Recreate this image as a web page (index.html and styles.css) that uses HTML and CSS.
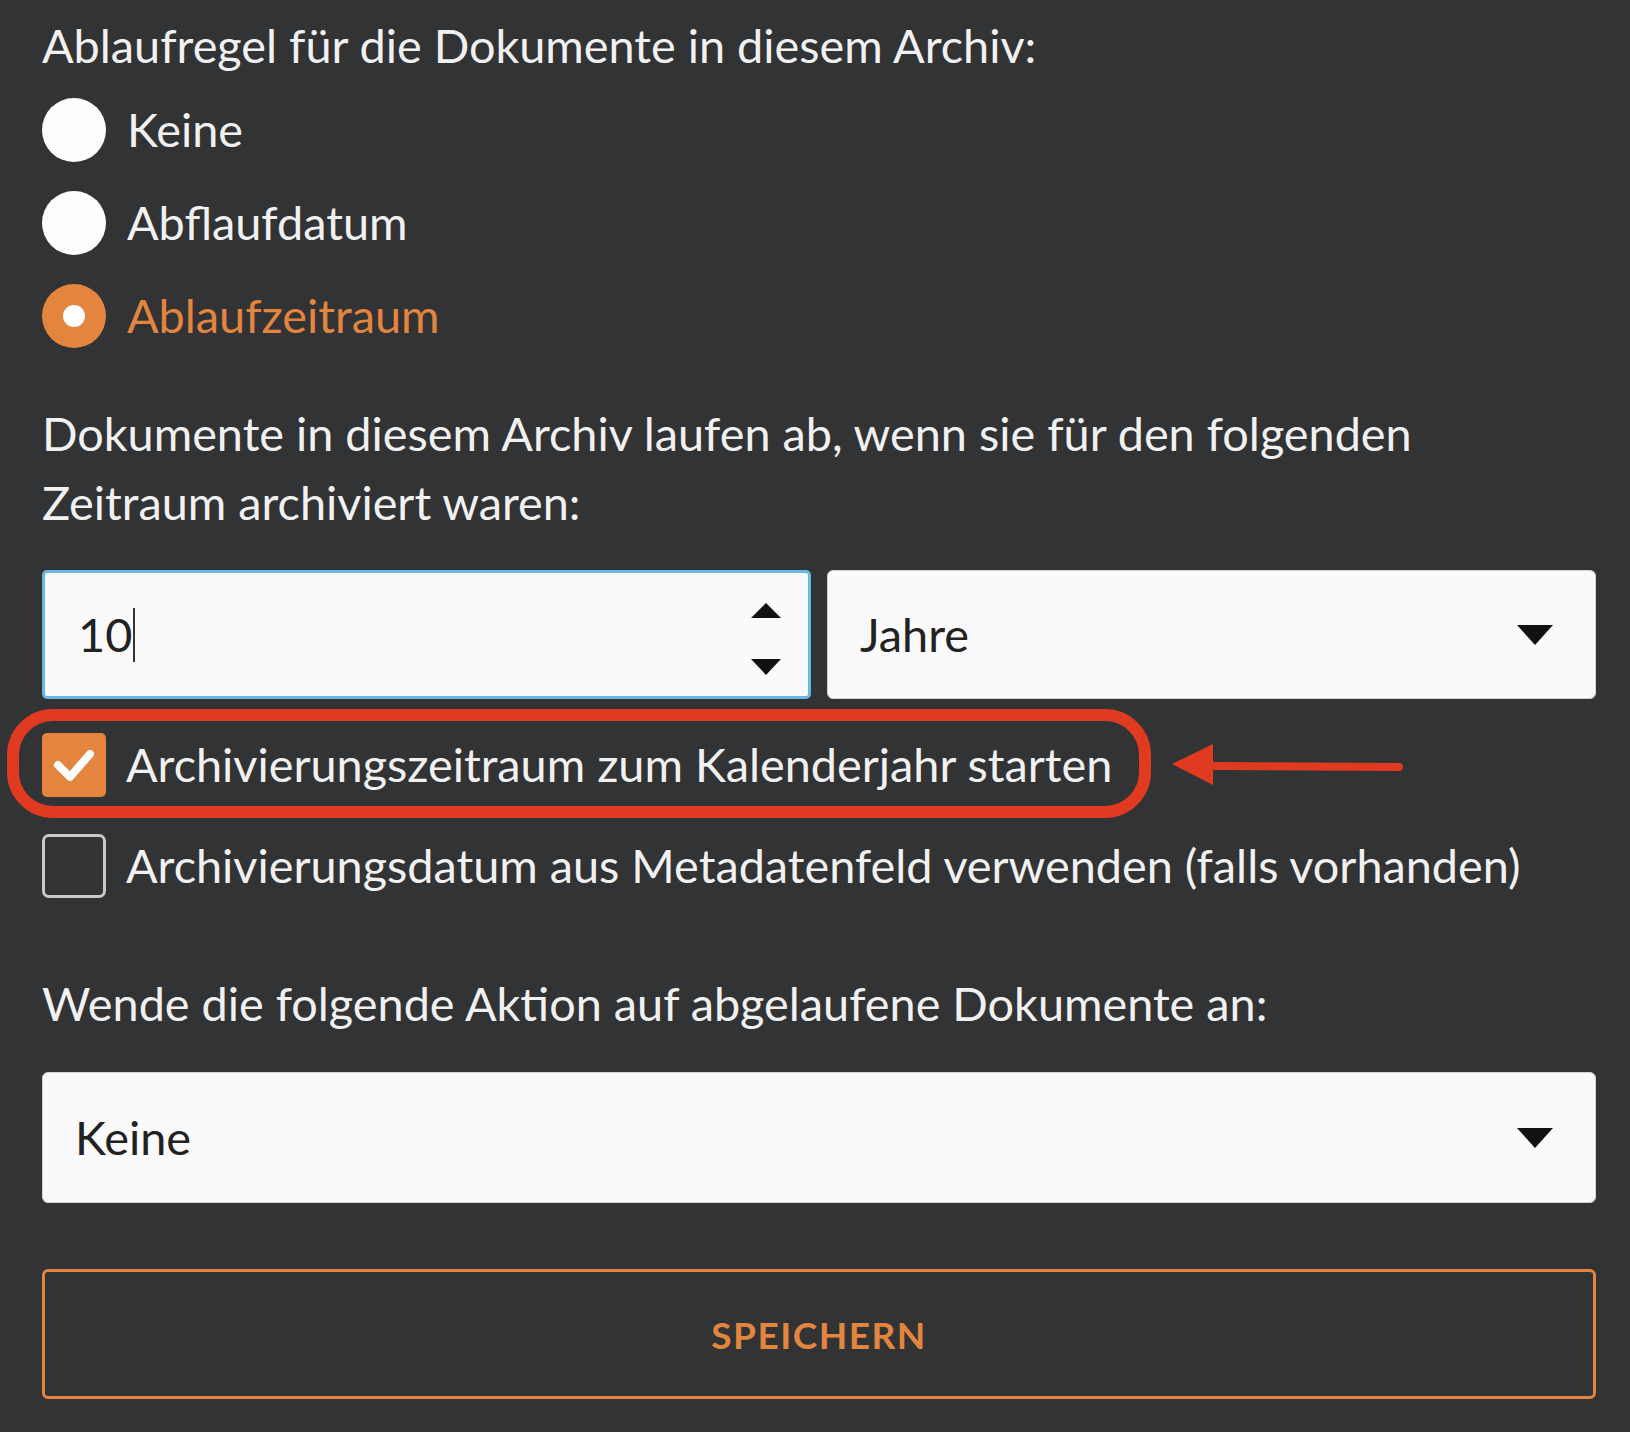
FILE: index.html
```html
<!DOCTYPE html>
<html lang="de">
<head>
<meta charset="utf-8">
<title>Ablaufregel</title>
<link rel="stylesheet" href="styles.css">
</head>
<body>
<form class="panel">
  <p class="label">Ablaufregel für die Dokumente in diesem Archiv:</p>
  <div class="radios">
    <div class="radio"><span class="dot"></span><span>Keine</span></div>
    <div class="radio"><span class="dot"></span><span>Abflaufdatum</span></div>
    <div class="radio is-on"><span class="dot"></span><span>Ablaufzeitraum</span></div>
  </div>

  <p class="label para">Dokumente in diesem Archiv laufen ab, wenn sie für den folgenden Zeitraum archiviert waren:</p>

  <div class="period">
    <div class="field number">
      <span class="value">10</span><span class="caret"></span>
      <svg class="spin" width="30" height="84" viewBox="0 0 30 84">
        <polygon points="15,10 30,25 0,25" fill="#111"/>
        <polygon points="0,66 30,66 15,82" fill="#111"/>
      </svg>
    </div>
    <div class="field select">
      <span class="value">Jahre</span>
      <svg class="chev" width="36" height="20" viewBox="0 0 36 20"><polygon points="0,0 36,0 18,20" fill="#111"/></svg>
    </div>
  </div>

  <div class="checks">
    <div class="check is-on">
      <span class="box">
        <svg width="64" height="64" viewBox="0 0 64 64"><polyline points="16,32 28,44 48,21" fill="none" stroke="#fff" stroke-width="8" stroke-linecap="round" stroke-linejoin="round"/></svg>
      </span>
      <span>Archivierungszeitraum zum Kalenderjahr starten</span>
      <span class="ring"></span>
      <svg class="pointer" width="240" height="50" viewBox="0 0 240 50">
        <line x1="44" y1="25" x2="234" y2="26" stroke="#e03a21" stroke-width="8" stroke-linecap="round"/>
        <polygon points="7,23 48,3 48,44" fill="#e03a21"/>
      </svg>
    </div>
    <div class="check">
      <span class="box"></span>
      <span>Archivierungsdatum aus Metadatenfeld verwenden (falls vorhanden)</span>
    </div>
  </div>

  <p class="label action">Wende die folgende Aktion auf abgelaufene Dokumente an:</p>
  <div class="field select wide">
    <span class="value">Keine</span>
    <svg class="chev" width="36" height="20" viewBox="0 0 36 20"><polygon points="0,0 36,0 18,20" fill="#111"/></svg>
  </div>

  <button type="button" class="save">SPEICHERN</button>
</form>
</body>
</html>
```

FILE: styles.css
```css
html, body {
  margin: 0;
  background: #323335;
}

.panel {
  width: 1554px;
  padding: 18px 0 30px 42px;
  font-family: Lato, "Noto Sans", sans-serif;
  font-size: 46.8px;
  line-height: 55px;
  color: #f1f1f1;
}

.label {
  margin: 0;
}

/* radio group */
.radios {
  margin-top: 10px;
}

.radio {
  display: flex;
  align-items: center;
  gap: 21px;
  height: 93px;
}

.dot {
  flex: none;
  width: 64px;
  height: 64px;
  border-radius: 50%;
  background: #fdfdfd;
  position: relative;
}

.radio.is-on {
  color: #e3843f;
}

.radio.is-on .dot {
  background: #e3843f;
}

.radio.is-on .dot::after {
  content: "";
  position: absolute;
  left: 21px;
  top: 21px;
  width: 22px;
  height: 22px;
  border-radius: 50%;
  background: #fff;
}

.para {
  margin-top: 37px;
  line-height: 69px;
}

/* period inputs */
.period {
  display: grid;
  grid-template-columns: 1fr 1fr;
  gap: 16px;
  margin-top: 33px;
}

.field {
  box-sizing: border-box;
  height: 129px;
  display: flex;
  align-items: center;
  padding: 0 42px 0 32px;
  background: #fafafa;
  border: 1px solid #d2d2d2;
  border-radius: 6px;
  color: #222;
}

.field .value {
  flex: none;
}

.field .chev {
  margin-left: auto;
}

.number {
  border: 3px solid #6ab7e6;
  border-radius: 5px;
  padding: 0 27px 0 33px;
}

.caret {
  width: 2px;
  height: 54px;
  margin-left: 1px;
  background: #333;
}

.spin {
  margin-left: auto;
}

/* checkboxes */
.checks {
  margin-top: 15px;
}

.check {
  position: relative;
  display: flex;
  align-items: center;
  gap: 20px;
  height: 101px;
}

.box {
  flex: none;
  box-sizing: border-box;
  width: 64px;
  height: 64px;
  border: 3px solid #c9c9c9;
  border-radius: 7px;
}

.check.is-on .box {
  border: 0;
  border-radius: 5px;
  background: #e3843f;
}

.box svg {
  display: block;
}

.ring {
  position: absolute;
  left: -35px;
  top: -5px;
  box-sizing: border-box;
  width: 1144px;
  height: 109px;
  border: 12px solid #e03a21;
  border-radius: 46px;
}

.pointer {
  position: absolute;
  left: 1123px;
  top: 27px;
}

.action {
  margin-top: 60px;
}

.wide {
  margin-top: 41px;
  height: 131px;
}

.save {
  display: block;
  box-sizing: border-box;
  width: 100%;
  height: 130px;
  margin-top: 66px;
  background: transparent;
  border: 3px solid #e3843f;
  border-radius: 6px;
  color: #e3843f;
  font-family: Lato, "Noto Sans", sans-serif;
  font-weight: 700;
  font-size: 37px;
  letter-spacing: 1.5px;
}
```
